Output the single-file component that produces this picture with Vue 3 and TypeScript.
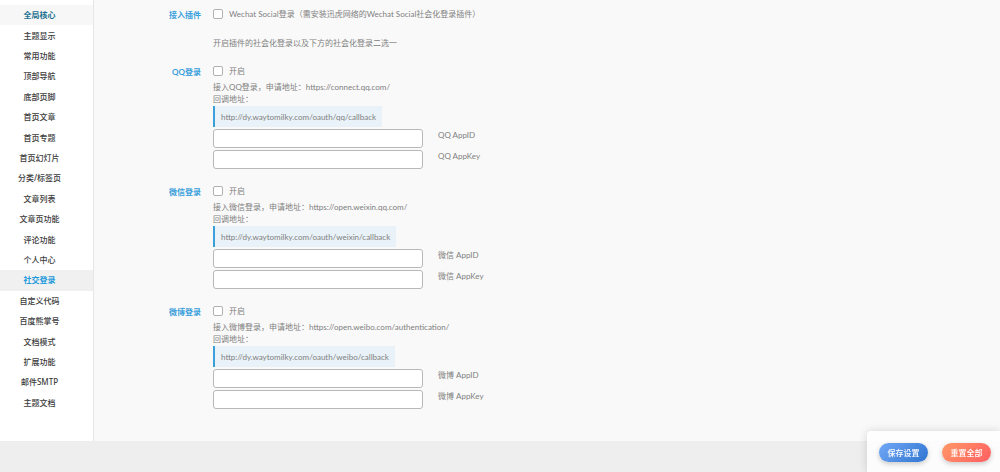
<script setup lang="ts">
import { reactive, ref } from 'vue'

interface Provider {
  id: string
  title: string
  name: string
  apply: string
  callback: string
  enabled: boolean
  appId: string
  appKey: string
}

const menu: string[] = [
  '全局核心', '主题显示', '常用功能', '顶部导航', '底部页脚', '首页文章', '首页专题',
  '首页幻灯片', '分类/标签页', '文章列表', '文章页功能', '评论功能', '个人中心', '社交登录',
  '自定义代码', '百度熊掌号', '文档模式', '扩展功能', '邮件SMTP', '主题文档',
]
const active = ref('社交登录')
const usePlugin = ref(false)

const providers = reactive<Provider[]>([
  { id: 'qq', title: 'QQ登录', name: 'QQ', apply: 'https://connect.qq.com/', callback: 'http://dy.waytomilky.com/oauth/qq/callback', enabled: false, appId: '', appKey: '' },
  { id: 'weixin', title: '微信登录', name: '微信', apply: 'https://open.weixin.qq.com/', callback: 'http://dy.waytomilky.com/oauth/weixin/callback', enabled: false, appId: '', appKey: '' },
  { id: 'weibo', title: '微博登录', name: '微博', apply: 'https://open.weibo.com/authentication/', callback: 'http://dy.waytomilky.com/oauth/weibo/callback', enabled: false, appId: '', appKey: '' },
])

function reset() {
  usePlugin.value = false
  for (const p of providers) {
    p.enabled = false
    p.appId = ''
    p.appKey = ''
  }
}
</script>

<template>
  <div class="page">
    <form class="options" @submit.prevent>
      <nav class="menu">
        <a
          v-for="(item, i) in menu"
          :key="item"
          href="#"
          :class="{ first: i === 0, active: item === active }"
          @click.prevent="active = item"
        >{{ item }}</a>
      </nav>

      <main class="content">
        <section class="row">
          <h4>接入插件</h4>
          <div class="field">
            <label class="check">
              <input v-model="usePlugin" type="checkbox">
              <span>Wechat Social登录（需安装迅虎网络的Wechat Social社会化登录插件）</span>
            </label>
            <p class="note">开启插件的社会化登录以及下方的社会化登录二选一</p>
          </div>
        </section>

        <section v-for="p in providers" :key="p.id" class="row">
          <h4>{{ p.title }}</h4>
          <div class="field">
            <label class="check">
              <input v-model="p.enabled" type="checkbox">
              <span>开启</span>
            </label>
            <p class="desc">接入{{ p.title }}，申请地址：{{ p.apply }}<br>回调地址：</p>
            <code class="callback">{{ p.callback }}</code>
            <div class="entry">
              <input :id="p.id + '-id'" v-model="p.appId" type="text">
              <label :for="p.id + '-id'">{{ p.name }} AppID</label>
            </div>
            <div class="entry">
              <input :id="p.id + '-key'" v-model="p.appKey" type="text">
              <label :for="p.id + '-key'">{{ p.name }} AppKey</label>
            </div>
          </div>
        </section>
      </main>
    </form>

    <div class="actions">
      <button type="button" class="save">保存设置</button>
      <button type="button" class="reset" @click="reset">重置全部</button>
    </div>
  </div>
</template>

<style>
body {
  background: #eeeeee;
}
</style>

<style scoped>
.page {
  font-family: "Noto Sans", "Noto Sans CJK SC", sans-serif;
  font-size: 8px;
  line-height: 12px;
  color: #808080;
}
.options {
  display: flex;
  background: #f9f9f9;
  box-shadow: 0 2px 12px rgba(0, 0, 0, 0.14);
}
.menu {
  flex: 0 0 93px;
  display: grid;
  grid-auto-rows: 1fr;
  padding: 5px 0 28px;
  background: #ffffff;
  border-right: 1px solid #e6e6e6;
}
.menu a {
  display: flex;
  align-items: center;
  justify-content: center;
  padding-right: 14px;
  color: #3c3c3c;
  font-weight: 500;
  text-decoration: none;
}
.menu a.first {
  background: #f7f7f7;
  color: #22708f;
  font-weight: 600;
}
.menu a.active {
  background: #f0f0f0;
  color: #1e9bdc;
  font-weight: 700;
}
.content {
  flex: 1;
  display: flex;
  flex-direction: column;
  gap: 16px;
  padding: 8px 16px 32px 72px;
  font-family: Lato, "Noto Sans CJK SC", sans-serif;
}
.row {
  display: flex;
  gap: 12px;
}
h4 {
  flex: 0 0 35px;
  margin: 1px 0 0;
  font-size: 8px;
  font-weight: 700;
  text-align: right;
  white-space: nowrap;
  color: #3aa0dc;
}
.field {
  flex: 1;
}
.check {
  display: flex;
  align-items: center;
  gap: 6px;
  height: 12px;
}
.check input {
  appearance: none;
  width: 10px;
  height: 10px;
  margin: 0;
  border: 1px solid #b0b0b0;
  border-radius: 2px;
  background: #ffffff;
}
.check input:checked {
  background: #3aa0dc;
}
.note {
  margin: 17px 0 0;
}
.desc {
  margin: 4px 0 1px;
}
.callback {
  display: block;
  width: fit-content;
  padding: 5px 6px 4px;
  border-left: 2px solid #3aa0dc;
  background: #e9f2f8;
  font-family: inherit;
}
.entry {
  display: flex;
  align-items: flex-start;
  gap: 15px;
  margin-top: 2px;
}
.entry input {
  box-sizing: border-box;
  width: 210px;
  height: 19px;
  padding: 0 6px;
  border: 1px solid #b8b8b8;
  border-radius: 3px;
  background: #ffffff;
  font: inherit;
}
.actions {
  position: fixed;
  right: 0;
  bottom: 0;
  display: flex;
  gap: 14px;
  padding: 12px 9px 10px 12px;
  border-radius: 4px 0 0 0;
  background: rgba(255, 255, 255, 0.8);
  box-shadow: 0 0 10px rgba(0, 0, 0, 0.15);
}
.actions button {
  width: 49px;
  height: 19px;
  padding: 0;
  border: 0;
  border-radius: 10px;
  color: #ffffff;
  font: inherit;
  font-weight: 500;
  box-shadow: 0 2px 5px rgba(0, 0, 0, 0.2);
}
.save {
  background: linear-gradient(135deg, #72a8f6, #2f74d0);
}
.reset {
  background: linear-gradient(135deg, #ff9966, #ff5e62);
}
</style>
